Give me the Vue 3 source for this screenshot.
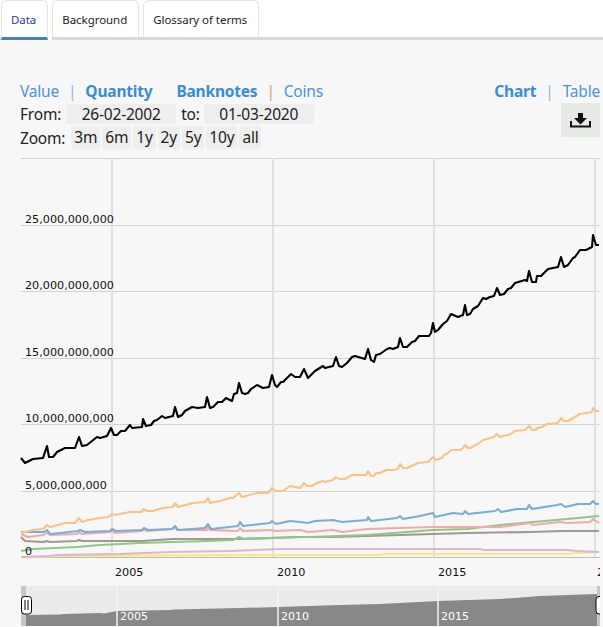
<script setup>
import { computed, ref } from 'vue'

const tabs = ['Data', 'Background', 'Glossary of terms']
const activeTab = ref('Data')
const zooms = ['3m', '6m', '1y', '2y', '5y', '10y', 'all']

const hLines = [158, 225, 291, 358, 424, 491]
const vLines = [112, 273, 434, 595]
const yLabels = [
  { text: '25,000,000,000', y: 223 },
  { text: '20,000,000,000', y: 289 },
  { text: '15,000,000,000', y: 356 },
  { text: '10,000,000,000', y: 422 },
  { text: '5,000,000,000', y: 489 },
  { text: '0', y: 555 },
]
const xLabels = [
  { text: '2005', x: 115 },
  { text: '2010', x: 277 },
  { text: '2015', x: 438 },
  { text: '2020', x: 597 },
]

// points are read off the picture, x y x y ...
const series = [
  { name: 'yellow', color: '#f8e878', pts: [21,557.5,60,556,150,555.5,300,555,380,555,385,554,570,554,575,553,599,552] },
  { name: 'purple', color: '#dcb5d4', pts: [21,557,50,556,57,555,120,554,170,552,230,551,280,549,300,549,480,549,483,550,567,550,577,551,599,552] },
  { name: 'grey', color: '#a09a8c', pts: [21,537,25,541,43,542,47,541,50,542,77,541,79,540,82,541,110,541,142,541,173,539,207,539,238,539,300,537,333,537,367,536,400,535,433,534,467,533,530,532,563,531,599,531] },
  { name: 'green', color: '#90c785', pts: [21,551,33,549,77,547,100,545,140,543,173,542,207,541,233,540,239,537,243,539,300,537,310,537,367,535,433,530,467,529,500,525,533,522,567,519,599,516] },
  { name: 'red', color: '#eeabaa', pts: [21,534,28,537,43,535,47,533,50,535,77,534,79,532,82,534,110,532,112,531,115,533,142,531,143,529,147,531,173,529,175,527,177,530,207,530,208,527,210,530,238,531,240,528,243,531,272,530,275,531,300,530,308,532,333,530,342,532,367,529,400,528,433,527,463,527,500,527,530,523,533,525,560,522,567,523,590,522,593,519,599,523] },
  { name: 'blue', color: '#7aadd6', pts: [21,532,33,532,44,532,47,530,50,534,60,533,78,531,80,530,85,532,110,531,112,529,116,531,142,530,144,528,148,530,172,529,175,526,178,530,205,528,208,524,211,529,238,526,240,522,243,526,270,523,272,521,276,524,290,521,300,522,308,523,315,521,333,520,342,522,367,520,368,517,371,521,397,518,400,516,403,519,420,516,433,513,435,517,453,513,463,514,465,511,468,514,495,511,498,509,501,512,517,509,527,509,529,505,532,509,557,505,561,504,565,507,578,504,590,504,593,501,596,504,599,504] },
  { name: 'orange', color: '#fdc086', pts: [21,533,33,530,43,529,47,525,50,527,58,525,65,523,75,523,79,518,82,522,88,520,100,518,108,517,112,514,115,515,130,512,142,512,143,509,147,511,153,511,163,508,173,507,175,503,178,507,193,503,205,502,208,498,210,503,220,501,230,498,233,498,239,493,242,497,257,493,268,493,272,488,275,491,283,491,290,486,300,488,304,483,307,486,312,486,317,483,323,481,325,482,333,480,336,477,339,479,345,479,352,475,366,475,368,471,371,476,374,476,376,473,380,473,386,470,393,470,398,469,400,464,403,468,407,468,418,463,428,462,433,457,436,460,442,458,444,455,448,453,451,450,460,450,463,448,465,445,468,448,471,448,475,445,478,444,483,440,494,437,497,434,500,437,511,434,515,431,525,430,529,426,532,430,536,430,537,428,542,427,547,424,558,423,561,418,564,421,568,421,573,418,580,414,586,413,592,412,593,408,596,411,599,411] },
  { name: 'total', color: '#000', pts: [21,458,25,463,33,459,43,458,47,446,49,457,53,457,57,452,65,448,75,448,79,437,82,446,87,445,92,441,97,437,100,438,107,436,111,428,114,435,117,435,121,431,125,431,130,425,132,428,142,427,143,419,146,426,151,425,154,421,157,420,162,416,165,418,173,416,175,407,178,417,182,415,185,411,192,407,198,408,205,407,207,397,210,408,213,407,218,402,222,402,226,398,232,401,234,394,237,393,239,383,242,393,245,394,248,393,251,389,257,385,263,388,269,387,272,375,275,385,277,387,281,382,283,382,291,374,295,377,300,377,304,369,308,378,315,371,323,366,325,368,333,366,336,357,339,366,342,367,347,363,352,357,355,356,365,359,368,349,371,360,374,362,376,355,380,354,387,349,390,348,393,349,398,347,400,338,403,347,407,347,412,342,415,341,419,336,429,336,431,333,433,323,435,332,438,330,443,324,447,321,451,314,458,317,463,315,465,305,467,315,470,314,473,309,478,306,483,298,486,299,490,297,494,296,497,288,500,295,504,294,508,289,511,288,515,283,525,280,527,281,529,271,532,282,536,282,537,276,541,276,548,269,558,267,561,257,564,267,568,265,573,258,575,257,580,250,586,250,592,247,593,235,596,245,599,245] },
]

function toPath(pts) {
  let d = ''
  for (let i = 0; i < pts.length; i += 2) {
    d += (i === 0 ? 'M' : 'L') + pts[i] + ' ' + pts[i + 1]
  }
  return d
}

const lines = computed(() => series.map((s) => ({ ...s, d: toPath(s.pts) })))

const rangeTop = [26,29,60,28.5,64,28,100,27,104,27.5,117,25,170,24,174,23.5,240,22,278,21,340,19,380,18,438,15,500,13,540,10,597,8]
const rangeArea = computed(() => toPath(rangeTop) + ' L597 40 L26 40 Z')
const rangeGrid = [117, 278, 438]
const rangeLabels = [
  { text: '2005', x: 120 },
  { text: '2010', x: 281 },
  { text: '2015', x: 441 },
]
</script>

<template>
  <div class="page">
    <nav class="tabs">
      <a
        v-for="t in tabs"
        :key="t"
        class="tab"
        :class="{ active: t === activeTab }"
        @click="activeTab = t"
      >{{ t }}</a>
    </nav>

    <main class="panel">
      <div class="controls">
        <div class="left">
          <div class="row first">
            <a class="link">Value</a>
            <span class="sep">|</span>
            <a class="link strong">Quantity</a>
            <a class="link strong notes">Banknotes</a>
            <span class="sep orange">|</span>
            <a class="link">Coins</a>
          </div>
          <div class="row dates">
            <span>From:</span>
            <span class="date">26-02-2002</span>
            <span class="to">to:</span>
            <span class="date">01-03-2020</span>
          </div>
          <div class="row zoom">
            <span class="zoom-label">Zoom:</span>
            <button v-for="z in zooms" :key="z" class="zoom-btn">{{ z }}</button>
          </div>
        </div>
        <div class="right">
          <div class="row first">
            <a class="link strong">Chart</a>
            <span class="sep">|</span>
            <a class="link">Table</a>
          </div>
          <button class="download" aria-label="Download">
            <svg width="21" height="15" viewBox="0 0 21 15">
              <path d="M8 0h5v5h4l-6.500 6.500L4 5h4z" fill="#111" />
              <path d="M1 8v5.500h19V8" fill="none" stroke="#111" stroke-width="2" />
            </svg>
          </button>
        </div>
      </div>

      <svg class="chart" width="600" height="428" viewBox="0 158 600 428">
        <line v-for="y in hLines" :key="y" x1="21" x2="600" :y1="y + 0.5" :y2="y + 0.5" class="h-grid" />
        <line v-for="x in vLines" :key="x" :x1="x" :x2="x" y1="158" y2="557" class="v-grid" />
        <line x1="21" x2="600" y1="557.5" y2="557.5" class="axis" />
        <path
          v-for="s in lines"
          :key="s.name"
          :d="s.d"
          :stroke="s.color"
          class="series"
        />
        <text v-for="l in yLabels" :key="l.text" x="25" :y="l.y" class="tick">{{ l.text }}</text>
        <text v-for="l in xLabels" :key="l.text" :x="l.x" y="576" class="tick">{{ l.text }}</text>
      </svg>

      <svg class="range" width="600" height="41" viewBox="0 0 600 41">
        <rect x="21" y="0" width="579" height="40" fill="#ebebeb" />
        <path :d="rangeArea" fill="#888" />
        <rect x="21" y="0" width="5" height="40" fill="#c6c6c6" />
        <rect x="597" y="0" width="3" height="40" fill="#c6c6c6" />
        <line v-for="x in rangeGrid" :key="x" :x1="x" :x2="x" y1="0" y2="40" class="range-grid" />
        <text v-for="l in rangeLabels" :key="l.text" :x="l.x" y="34" class="range-tick">{{ l.text }}</text>
        <g class="handle">
          <rect x="21.500" y="10.500" width="10" height="17.500" rx="3" />
          <path d="M25 14v10M28 14v10" />
        </g>
        <g class="handle">
          <rect x="596" y="10.500" width="10" height="17.500" rx="3" />
        </g>
      </svg>
    </main>
  </div>
</template>

<style>
html,
body {
  background: #f7f7f7;
  overflow: hidden;
}
</style>

<style scoped>
.page {
  width: 603px;
  height: 627px;
  overflow: hidden;
  font-family: "Noto Sans", "Open Sans", sans-serif;
  color: #222;
  background: #f7f7f7;
}
.tabs {
  display: flex;
  gap: 4px;
  height: 37px;
  padding-left: 1px;
  background: #fff;
  border-bottom: 3px solid #d8d8d8;
}
.tab {
  height: 37px;
  box-sizing: border-box;
  padding: 0 11px 0 9px;
  border: 1px solid #e4e4e4;
  border-bottom: none;
  border-radius: 6px 6px 0 0;
  background: #fff;
  font-size: 11.500px;
  letter-spacing: -0.05px;
  line-height: 38px;
  color: #222;
  cursor: pointer;
}
.tab.active {
  height: 40px;
  border-bottom: 3px solid #4a7cc0;
  color: #2a3f8f;
  box-shadow: 4px 0 0 #fff;
}
.panel {
  padding-top: 40px;
}
.controls {
  display: flex;
  justify-content: space-between;
  height: 78px;
  padding: 0 3px 0 20px;
  font-size: 15.500px;
  letter-spacing: -0.2px;
}
.row {
  display: flex;
  align-items: center;
}
.row.first {
  height: 21px;
  margin-bottom: 2px;
}
.link {
  color: #4b94d8;
  cursor: pointer;
}
.link.strong {
  font-weight: 700;
  color: #3a8cd6;
}
.notes {
  margin-left: 24px;
}
.sep {
  margin: 0 9px;
  color: #8db7de;
}
.sep.orange {
  color: #d9a078;
}
.dates {
  height: 21px;
}
.date {
  width: 110px;
  margin-left: 5px;
  border-radius: 3px;
  background: #eee;
  text-align: center;
  line-height: 20px;
}
.to {
  margin-left: 5px;
}
.to + .date {
  margin-left: 4px;
}
.zoom {
  margin-top: 2px;
  gap: 2px;
}
.zoom-label {
  margin-right: 4px;
}
.zoom-btn {
  height: 23px;
  padding: 0 3px;
  border: none;
  border-radius: 3px;
  background: #eee;
  color: #222;
  font: inherit;
  letter-spacing: inherit;
  line-height: 23px;
}
.right {
  display: flex;
  flex-direction: column;
  align-items: flex-end;
}
.download {
  display: flex;
  align-items: center;
  justify-content: center;
  width: 39px;
  height: 34px;
  border: none;
  padding: 0;
  background: #e6ebe5;
}
.chart,
.range {
  display: block;
}
.h-grid {
  stroke: #d2d2d2;
  stroke-width: 1;
}
.v-grid {
  stroke: #e0e0e0;
  stroke-width: 2;
}
.axis {
  stroke: #bdbdbd;
  stroke-width: 1;
}
.series {
  fill: none;
  stroke-width: 2.100;
  stroke-linejoin: round;
}
.tick {
  font-family: "DejaVu Sans", sans-serif;
  font-size: 11.200px;
  fill: #111;
}
.range-grid {
  stroke: #f4f4f4;
  stroke-width: 1.500;
}
.range-tick {
  font-family: "DejaVu Sans", sans-serif;
  font-size: 11px;
  fill: #fff;
}
.handle rect {
  fill: #fff;
  stroke: #000;
  stroke-width: 1;
}
.handle path {
  fill: none;
  stroke: #000;
  stroke-width: 1;
}
</style>
